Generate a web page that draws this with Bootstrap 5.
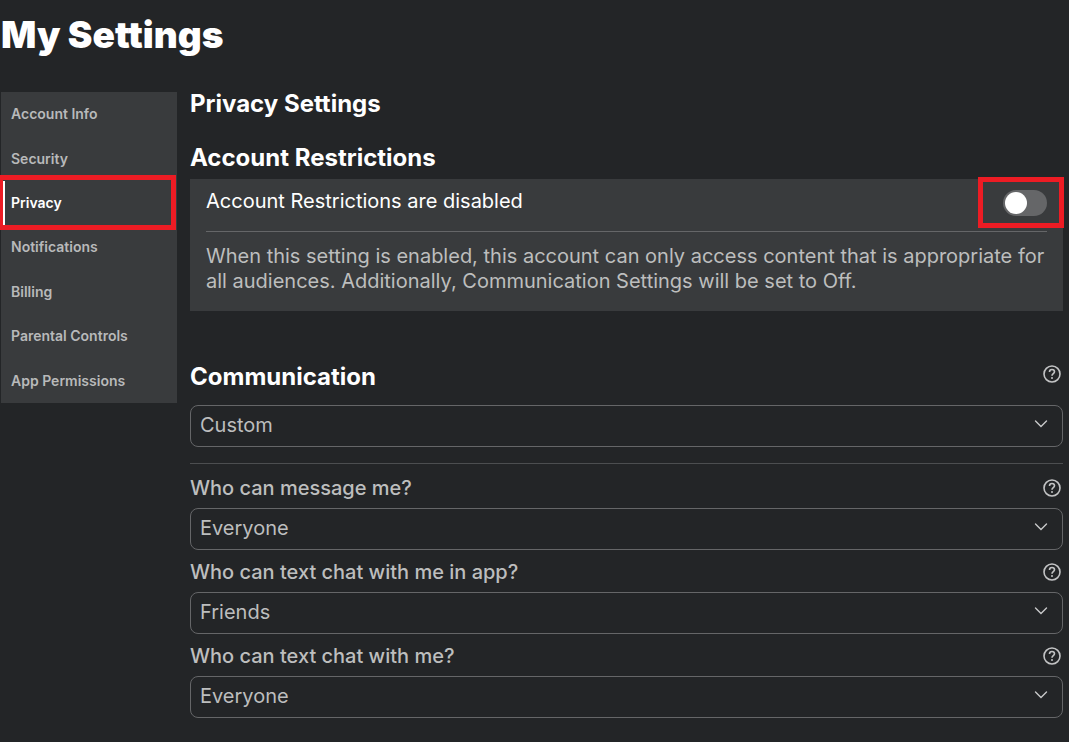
<!DOCTYPE html>
<html lang="en">
<head>
<meta charset="utf-8">
<meta name="viewport" content="width=device-width, initial-scale=1">
<title>My Settings</title>
<link href="https://cdn.jsdelivr.net/npm/bootstrap@5.3.0/dist/css/bootstrap.min.css" rel="stylesheet">
<style>
  body { background: #232527; color: #bdbebe; font-family: Inter, "Open Sans", sans-serif; font-size: 20px; line-height: 25px; overflow-x: hidden; }
  .page-title { color: #fff; font-size: 37px; font-weight: 900; line-height: 44px; padding: 13px 1px 0; margin-bottom: 35px; }
  .settings-layout { gap: 13px; padding: 0 6px 24px 1px; }
  .settings-menu { width: 176px; min-height: 311px; background: #393b3d; flex-wrap: nowrap; }
  .settings-menu .nav-link { color: #b8b9ba; font-size: 14px; line-height: 20px; font-weight: 600; padding: 0 10px; }
  .settings-menu .nav-link:hover { color: #fff; }
  .settings-menu .nav-link.active { color: #fff; box-shadow: inset 4px 0 #fff; }
  .callout-box { position: absolute; border: 5px solid #ed1c24; pointer-events: none; }
  .callout-menu { inset: -6px 1px -5px -3px; }
  .callout-switch { inset: -13px -17px -12px -25px; }
  .section-title { color: #fff; font-size: 24px; font-weight: 700; line-height: 24px; margin: 0; }
  .restrictions { padding-top: 30px; }
  .restriction-panel { background: #393b3d; padding: 11px 16px 17px; margin-top: 9px; }
  .restriction-head { color: #fff; border-bottom: 1px solid #656668; padding-bottom: 15px; line-height: 23px; }
  .restriction-text { padding-top: 12px; }
  .form-switch .switch-input { width: 44px; height: 26px; margin: 0; border: 0; background-color: #656668; display: block; float: none;
    background-image: url("data:image/svg+xml,%3csvg xmlns='http://www.w3.org/2000/svg' viewBox='0 0 26 26'%3e%3ccircle cx='13' cy='13' r='11' fill='%23fff'/%3e%3c/svg%3e"); }
  .form-switch .switch-input:checked { background-color: #00b06f; }
  .communication { padding-top: 52px; }
  .setting-select { height: 42px; padding: 0 40px 2px 9px; color: #bdbebe; background-color: #232527; border: 1px solid #656668; border-radius: 8px; font-size: 20px; line-height: 25px;
    background-image: url("data:image/svg+xml,%3csvg xmlns='http://www.w3.org/2000/svg' viewBox='0 0 16 16' fill='none' stroke='%23c8c9ca' stroke-width='1.4' stroke-linecap='round'%3e%3cpath d='m2.500 5 5.500 5.500 5.500-5.500'/%3e%3c/svg%3e"); background-size: 16px 16px; background-position: right 13px top 10px; }
  .setting-label { font-weight: 500; }
  .field-head { height: 42px; padding-top: 2px; }
  .help-btn { width: 18px; height: 18px; color: #c2c3c4; margin-right: 2px; }
  .rule { border-top: 1px solid #4c4e50; margin-top: 16px; padding-top: 2px; }
</style>
</head>
<body>
<h1 class="page-title">My Settings</h1>
<div class="settings-layout d-flex align-items-start">
  <nav class="settings-menu nav flex-column flex-shrink-0" aria-label="Settings">
    <a class="nav-link flex-fill d-flex align-items-center" href="#info">Account Info</a>
    <a class="nav-link flex-fill d-flex align-items-center" href="#security">Security</a>
    <a class="nav-link active flex-fill d-flex align-items-center position-relative" aria-current="page" href="#privacy">Privacy<span class="callout-box callout-menu"></span></a>
    <a class="nav-link flex-fill d-flex align-items-center" href="#notifications">Notifications</a>
    <a class="nav-link flex-fill d-flex align-items-center" href="#billing">Billing</a>
    <a class="nav-link flex-fill d-flex align-items-center" href="#parental">Parental Controls</a>
    <a class="nav-link flex-fill d-flex align-items-center" href="#apps">App Permissions</a>
  </nav>
  <main class="flex-grow-1">
    <h2 class="section-title">Privacy Settings</h2>
    <section class="restrictions">
      <h3 class="section-title">Account Restrictions</h3>
      <div class="restriction-panel">
        <div class="restriction-head d-flex justify-content-between align-items-start">
          <label for="restrictions">Account Restrictions are disabled</label>
          <div class="form-check form-switch position-relative p-0 m-0">
            <input class="form-check-input switch-input" type="checkbox" role="switch" id="restrictions">
            <span class="callout-box callout-switch"></span>
          </div>
        </div>
        <p class="restriction-text mb-0">When this setting is enabled, this account can only access content that is appropriate for all audiences. Additionally, Communication Settings will be set to Off.</p>
      </div>
    </section>
    <section class="communication">
      <div class="field-head d-flex justify-content-between align-items-start">
        <h3 class="section-title"><label for="communication">Communication</label></h3>
        <button class="help-btn btn p-0 border-0 d-flex" type="button" aria-label="About communication"><svg width="18" height="18"><use href="#help"/></svg></button>
      </div>
      <select class="form-select setting-select" id="communication"><option>Custom</option><option>Off</option></select>
      <div class="rule">
        <div class="field-head d-flex justify-content-between align-items-center">
          <label class="setting-label" for="message">Who can message me?</label>
          <button class="help-btn btn p-0 border-0 d-flex" type="button" aria-label="About messages"><svg width="18" height="18"><use href="#help"/></svg></button>
        </div>
        <select class="form-select setting-select" id="message"><option>Everyone</option><option>Friends</option></select>
        <div class="field-head d-flex justify-content-between align-items-center">
          <label class="setting-label" for="app-chat">Who can text chat with me in app?</label>
          <button class="help-btn btn p-0 border-0 d-flex" type="button" aria-label="About app chat"><svg width="18" height="18"><use href="#help"/></svg></button>
        </div>
        <select class="form-select setting-select" id="app-chat"><option>Friends</option><option>Everyone</option></select>
        <div class="field-head d-flex justify-content-between align-items-center">
          <label class="setting-label" for="chat">Who can text chat with me?</label>
          <button class="help-btn btn p-0 border-0 d-flex" type="button" aria-label="About text chat"><svg width="18" height="18"><use href="#help"/></svg></button>
        </div>
        <select class="form-select setting-select" id="chat"><option>Everyone</option><option>Friends</option></select>
      </div>
    </section>
  </main>
</div>
<svg class="d-none">
  <symbol id="help" viewBox="0 0 18 18">
    <circle cx="9" cy="9" r="8" fill="none" stroke="currentColor" stroke-width="1.6"/>
    <path d="M6.500 7C6.500 5.400 7.500 4.500 9 4.500s2.500.900 2.500 2.300c0 1.900-2.500 1.900-2.500 4" fill="none" stroke="currentColor" stroke-width="1.600"/>
    <circle cx="9" cy="13" r="1" fill="currentColor"/>
  </symbol>
</svg>
<script src="https://cdn.jsdelivr.net/npm/bootstrap@5.3.0/dist/js/bootstrap.bundle.min.js"></script>
</body>
</html>
